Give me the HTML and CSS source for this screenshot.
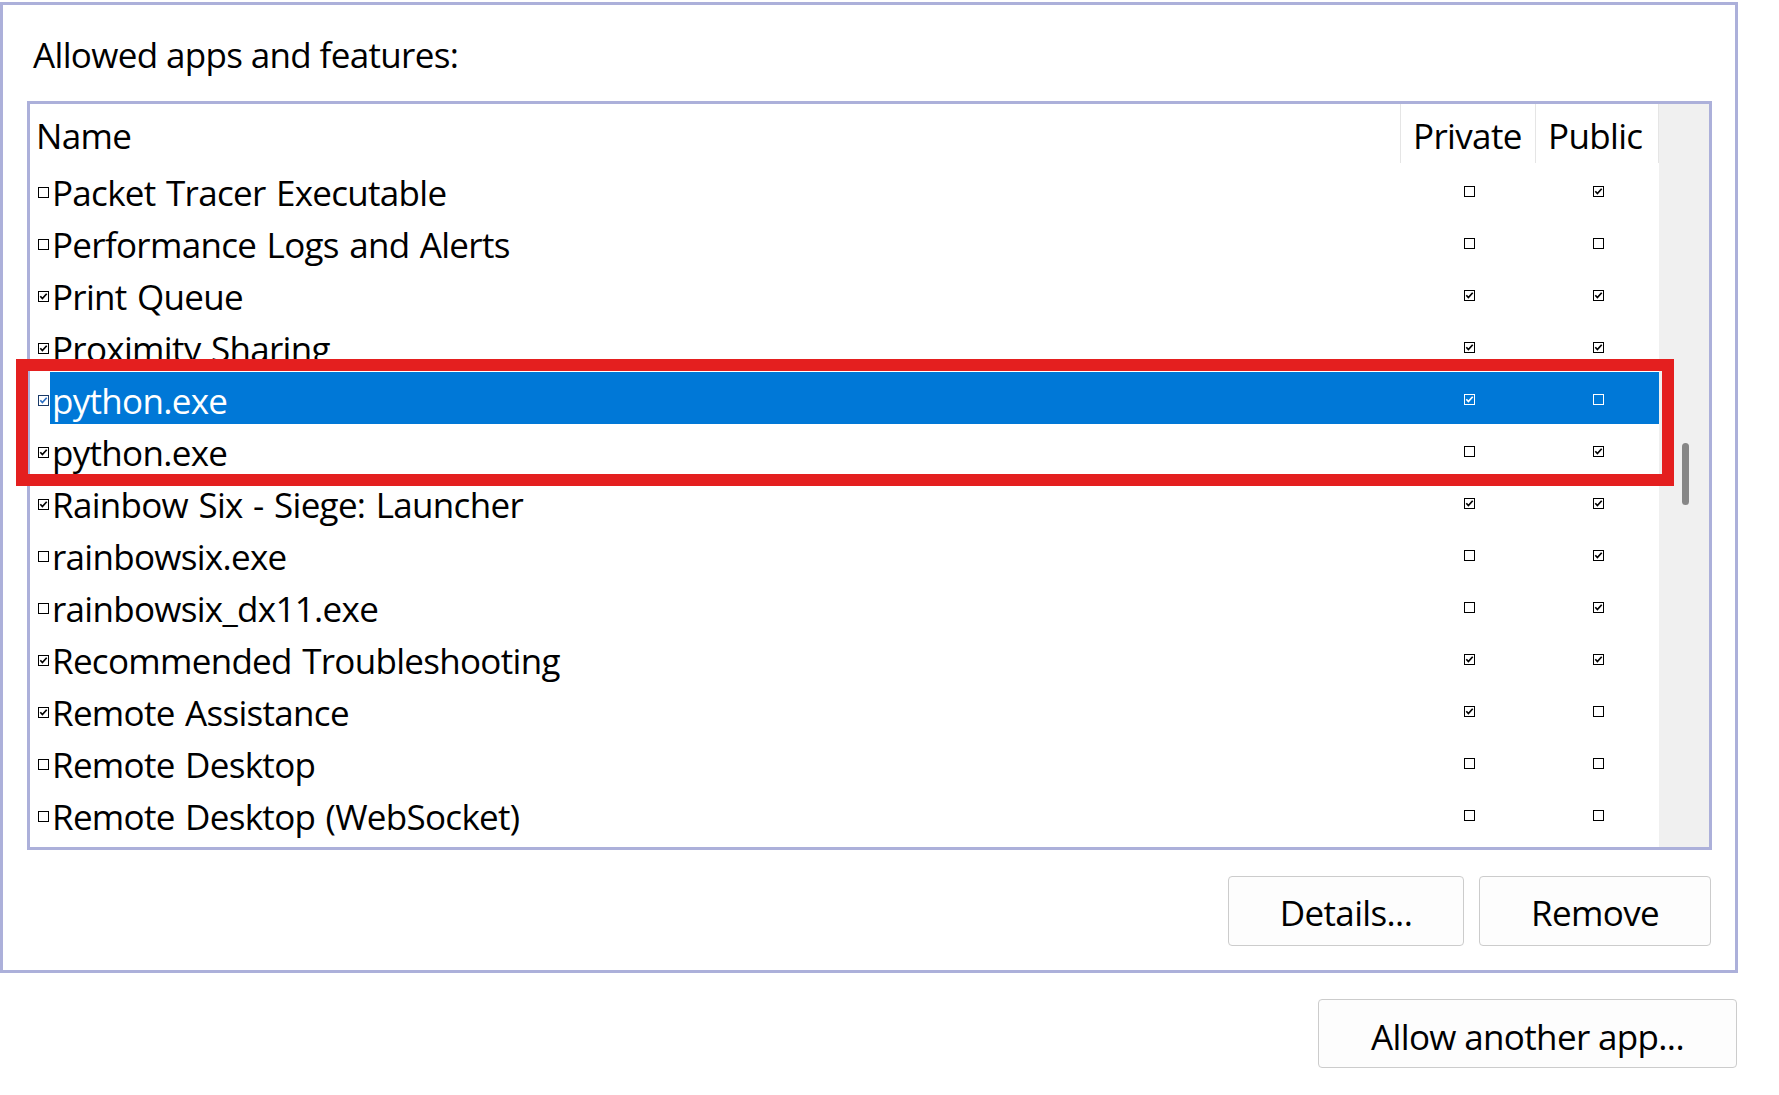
FILE: index.html
```html
<!DOCTYPE html>
<html lang="en">
<head>
<meta charset="utf-8">
<title>Allowed apps</title>
<link rel="stylesheet" href="styles.css">
</head>
<body>
<div class="group">
  <div class="title">Allowed apps and features:</div>
  <div class="list">
    <div class="table">
      <div class="head">
        <div class="hcell hname">Name</div>
        <div class="hcell">Private</div>
        <div class="hcell">Public</div>
      </div>

      <div class="row">
        <div class="name"><svg class="cb" viewBox="0 0 11 11"><rect x="0.5" y="0.5" width="10" height="10"/></svg><span>Packet Tracer Executable</span></div>
        <div class="cell"><svg class="cb" viewBox="0 0 11 11"><rect x="0.5" y="0.5" width="10" height="10"/></svg></div>
        <div class="cell"><svg class="cb" viewBox="0 0 11 11"><rect x="0.5" y="0.5" width="10" height="10"/><path d="M2.3 5.3 L4.4 7.6 L8.7 2.8"/></svg></div>
      </div>

      <div class="row">
        <div class="name"><svg class="cb" viewBox="0 0 11 11"><rect x="0.5" y="0.5" width="10" height="10"/></svg><span>Performance Logs and Alerts</span></div>
        <div class="cell"><svg class="cb" viewBox="0 0 11 11"><rect x="0.5" y="0.5" width="10" height="10"/></svg></div>
        <div class="cell"><svg class="cb" viewBox="0 0 11 11"><rect x="0.5" y="0.5" width="10" height="10"/></svg></div>
      </div>

      <div class="row">
        <div class="name"><svg class="cb" viewBox="0 0 11 11"><rect x="0.5" y="0.5" width="10" height="10"/><path d="M2.3 5.3 L4.4 7.6 L8.7 2.8"/></svg><span>Print Queue</span></div>
        <div class="cell"><svg class="cb" viewBox="0 0 11 11"><rect x="0.5" y="0.5" width="10" height="10"/><path d="M2.3 5.3 L4.4 7.6 L8.7 2.8"/></svg></div>
        <div class="cell"><svg class="cb" viewBox="0 0 11 11"><rect x="0.5" y="0.5" width="10" height="10"/><path d="M2.3 5.3 L4.4 7.6 L8.7 2.8"/></svg></div>
      </div>

      <div class="row">
        <div class="name"><svg class="cb" viewBox="0 0 11 11"><rect x="0.5" y="0.5" width="10" height="10"/><path d="M2.3 5.3 L4.4 7.6 L8.7 2.8"/></svg><span>Proximity Sharing</span></div>
        <div class="cell"><svg class="cb" viewBox="0 0 11 11"><rect x="0.5" y="0.5" width="10" height="10"/><path d="M2.3 5.3 L4.4 7.6 L8.7 2.8"/></svg></div>
        <div class="cell"><svg class="cb" viewBox="0 0 11 11"><rect x="0.5" y="0.5" width="10" height="10"/><path d="M2.3 5.3 L4.4 7.6 L8.7 2.8"/></svg></div>
      </div>

      <div class="row sel">
        <div class="name"><svg class="cb" viewBox="0 0 11 11"><rect x="0.5" y="0.5" width="10" height="10"/><path d="M2.3 5.3 L4.4 7.6 L8.7 2.8"/></svg><span>python.exe</span></div>
        <div class="cell"><svg class="cb" viewBox="0 0 11 11"><rect x="0.5" y="0.5" width="10" height="10"/><path d="M2.3 5.3 L4.4 7.6 L8.7 2.8"/></svg></div>
        <div class="cell"><svg class="cb" viewBox="0 0 11 11"><rect x="0.5" y="0.5" width="10" height="10"/></svg></div>
      </div>

      <div class="row">
        <div class="name"><svg class="cb" viewBox="0 0 11 11"><rect x="0.5" y="0.5" width="10" height="10"/><path d="M2.3 5.3 L4.4 7.6 L8.7 2.8"/></svg><span>python.exe</span></div>
        <div class="cell"><svg class="cb" viewBox="0 0 11 11"><rect x="0.5" y="0.5" width="10" height="10"/></svg></div>
        <div class="cell"><svg class="cb" viewBox="0 0 11 11"><rect x="0.5" y="0.5" width="10" height="10"/><path d="M2.3 5.3 L4.4 7.6 L8.7 2.8"/></svg></div>
      </div>

      <div class="row">
        <div class="name"><svg class="cb" viewBox="0 0 11 11"><rect x="0.5" y="0.5" width="10" height="10"/><path d="M2.3 5.3 L4.4 7.6 L8.7 2.8"/></svg><span>Rainbow Six - Siege: Launcher</span></div>
        <div class="cell"><svg class="cb" viewBox="0 0 11 11"><rect x="0.5" y="0.5" width="10" height="10"/><path d="M2.3 5.3 L4.4 7.6 L8.7 2.8"/></svg></div>
        <div class="cell"><svg class="cb" viewBox="0 0 11 11"><rect x="0.5" y="0.5" width="10" height="10"/><path d="M2.3 5.3 L4.4 7.6 L8.7 2.8"/></svg></div>
      </div>

      <div class="row">
        <div class="name"><svg class="cb" viewBox="0 0 11 11"><rect x="0.5" y="0.5" width="10" height="10"/></svg><span>rainbowsix.exe</span></div>
        <div class="cell"><svg class="cb" viewBox="0 0 11 11"><rect x="0.5" y="0.5" width="10" height="10"/></svg></div>
        <div class="cell"><svg class="cb" viewBox="0 0 11 11"><rect x="0.5" y="0.5" width="10" height="10"/><path d="M2.3 5.3 L4.4 7.6 L8.7 2.8"/></svg></div>
      </div>

      <div class="row">
        <div class="name"><svg class="cb" viewBox="0 0 11 11"><rect x="0.5" y="0.5" width="10" height="10"/></svg><span>rainbowsix_dx11.exe</span></div>
        <div class="cell"><svg class="cb" viewBox="0 0 11 11"><rect x="0.5" y="0.5" width="10" height="10"/></svg></div>
        <div class="cell"><svg class="cb" viewBox="0 0 11 11"><rect x="0.5" y="0.5" width="10" height="10"/><path d="M2.3 5.3 L4.4 7.6 L8.7 2.8"/></svg></div>
      </div>

      <div class="row">
        <div class="name"><svg class="cb" viewBox="0 0 11 11"><rect x="0.5" y="0.5" width="10" height="10"/><path d="M2.3 5.3 L4.4 7.6 L8.7 2.8"/></svg><span>Recommended Troubleshooting</span></div>
        <div class="cell"><svg class="cb" viewBox="0 0 11 11"><rect x="0.5" y="0.5" width="10" height="10"/><path d="M2.3 5.3 L4.4 7.6 L8.7 2.8"/></svg></div>
        <div class="cell"><svg class="cb" viewBox="0 0 11 11"><rect x="0.5" y="0.5" width="10" height="10"/><path d="M2.3 5.3 L4.4 7.6 L8.7 2.8"/></svg></div>
      </div>

      <div class="row">
        <div class="name"><svg class="cb" viewBox="0 0 11 11"><rect x="0.5" y="0.5" width="10" height="10"/><path d="M2.3 5.3 L4.4 7.6 L8.7 2.8"/></svg><span>Remote Assistance</span></div>
        <div class="cell"><svg class="cb" viewBox="0 0 11 11"><rect x="0.5" y="0.5" width="10" height="10"/><path d="M2.3 5.3 L4.4 7.6 L8.7 2.8"/></svg></div>
        <div class="cell"><svg class="cb" viewBox="0 0 11 11"><rect x="0.5" y="0.5" width="10" height="10"/></svg></div>
      </div>

      <div class="row">
        <div class="name"><svg class="cb" viewBox="0 0 11 11"><rect x="0.5" y="0.5" width="10" height="10"/></svg><span>Remote Desktop</span></div>
        <div class="cell"><svg class="cb" viewBox="0 0 11 11"><rect x="0.5" y="0.5" width="10" height="10"/></svg></div>
        <div class="cell"><svg class="cb" viewBox="0 0 11 11"><rect x="0.5" y="0.5" width="10" height="10"/></svg></div>
      </div>

      <div class="row">
        <div class="name"><svg class="cb" viewBox="0 0 11 11"><rect x="0.5" y="0.5" width="10" height="10"/></svg><span>Remote Desktop (WebSocket)</span></div>
        <div class="cell"><svg class="cb" viewBox="0 0 11 11"><rect x="0.5" y="0.5" width="10" height="10"/></svg></div>
        <div class="cell"><svg class="cb" viewBox="0 0 11 11"><rect x="0.5" y="0.5" width="10" height="10"/></svg></div>
      </div>
    </div>
    <div class="scroll"><div class="thumb"></div></div>
  </div>
  <div class="actions">
    <button class="btn btn-details" type="button">Details...</button>
    <button class="btn btn-remove" type="button">Remove</button>
  </div>
</div>
<div class="bottom">
  <button class="btn btn-allow" type="button">Allow another app...</button>
</div>
<div class="highlight"></div>
</body>
</html>
```
FILE: styles.css
```css
* { box-sizing: border-box; }

html, body {
  margin: 0;
  padding: 0;
  background: #ffffff;
}

body {
  width: 1779px;
  height: 1095px;
  overflow: hidden;
  font-family: "Open Sans", "Noto Sans", sans-serif;
  font-size: 35px;
  letter-spacing: -0.65px;
  line-height: 48px;
  color: #000000;
}

.group {
  width: 1738px;
  height: 971px;
  margin-top: 2px;
  border: 3px solid #acb0da;
  padding: 26px 23px 24px 24px;
  display: flex;
  flex-direction: column;
}

.title {
  padding-left: 6px;
  height: 48px;
  margin-bottom: 22px;
}

.list {
  width: 1685px;
  height: 749px;
  border: 3px solid #acb0da;
  display: flex;
  overflow: hidden;
  flex: none;
}

.table {
  width: 1629px;
  flex: none;
}

.head {
  display: grid;
  grid-template-columns: 1371px 135px 123px;
  height: 60px;
}

.hcell {
  border-right: 1px solid #e5e5e5;
  height: 59px;
  padding-top: 8px;
  padding-left: 12px;
  white-space: nowrap;
}

.hcell.hname {
  padding-left: 6px;
}

.row {
  display: grid;
  grid-template-columns: 1371px 135px 123px;
  height: 52px;
}

.row.sel {
  background: linear-gradient(to right, transparent 20px, #0078d7 20px);
  color: #ffffff;
}

.name {
  display: flex;
  align-items: center;
  padding-left: 8px;
  white-space: nowrap;
}

.name span {
  margin-top: 5px;
  padding-left: 3px;
  letter-spacing: -0.7px;
  word-spacing: 2px;
}

.cell {
  display: flex;
  align-items: center;
  justify-content: center;
  padding-left: 2px;
}

.cb {
  width: 11px;
  height: 11px;
  flex: none;
  display: block;
}

.name .cb { margin-top: 3px; }
.cell .cb { margin-top: 1px; }

.cb rect {
  fill: #ffffff;
  stroke: #000000;
  stroke-width: 1;
}

.cb path {
  fill: none;
  stroke: #000000;
  stroke-width: 1.7;
  stroke-linejoin: miter;
}

.sel .name .cb rect { stroke: #1a3a68; }
.sel .name .cb path { stroke: #2b6fc4; }

.sel .cell .cb rect {
  fill: none;
  stroke: #ffffff;
}
.sel .cell .cb path { stroke: #ffffff; }

.scroll {
  width: 50px;
  flex: none;
  background: #f0f0f0;
  padding-top: 339px;
  padding-left: 23px;
}

.thumb {
  width: 7px;
  height: 62px;
  border-radius: 4px;
  background: #878787;
}

.actions {
  width: 1685px;
  margin-top: 26px;
  padding-right: 1px;
  display: flex;
  justify-content: flex-end;
  gap: 15px;
}

.btn {
  font: inherit;
  letter-spacing: inherit;
  color: #000000;
  background: #fdfdfd;
  border: 1px solid #cccccc;
  border-radius: 4px;
  height: 70px;
  padding: 3px 0 0 0;
  display: flex;
  align-items: center;
  justify-content: center;
  white-space: nowrap;
}

.btn-details { width: 236px; }
.btn-remove { width: 232px; }

.bottom {
  width: 1738px;
  margin-top: 26px;
  padding-right: 1px;
  display: flex;
  justify-content: flex-end;
}

.btn-allow {
  width: 419px;
  height: 69px;
  padding-top: 7px;
}

.highlight {
  position: absolute;
  left: 16px;
  top: 359px;
  width: 1658px;
  height: 127px;
  border: 12px solid #e41f1f;
  pointer-events: none;
}
```
